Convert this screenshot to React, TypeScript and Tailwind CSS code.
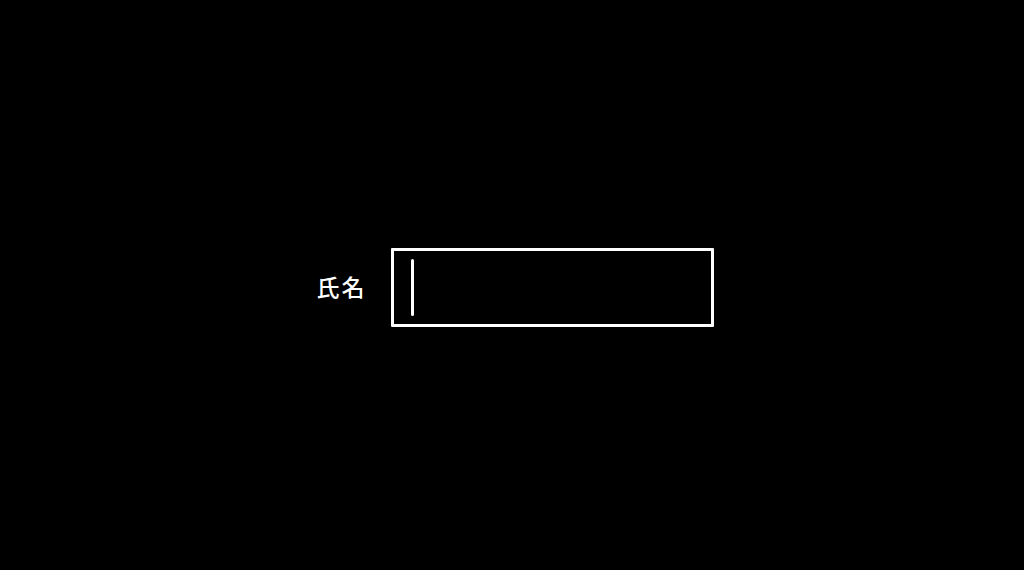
import React from 'react';

const App: React.FC = () => {
  return (
    <div className="w-full h-[570px] bg-black flex items-center justify-center pt-[5px] pl-[6px]">
      <div className="flex items-center gap-[24px]">
        <label
          className="text-white text-[23px] leading-none tracking-[2px] font-medium pb-[3px]"
          style={{ fontFamily: '"Noto Sans CJK JP", "Noto Sans", sans-serif' }}
        >
          氏名
        </label>
        <div className="w-[323px] h-[79px] border-[3px] border-white rounded-[1px] flex items-center pl-[17px]">
          {/* caret */}
          <div className="w-[3px] h-[57px] bg-white rounded-full" />
        </div>
      </div>
    </div>
  );
};

export default App;
